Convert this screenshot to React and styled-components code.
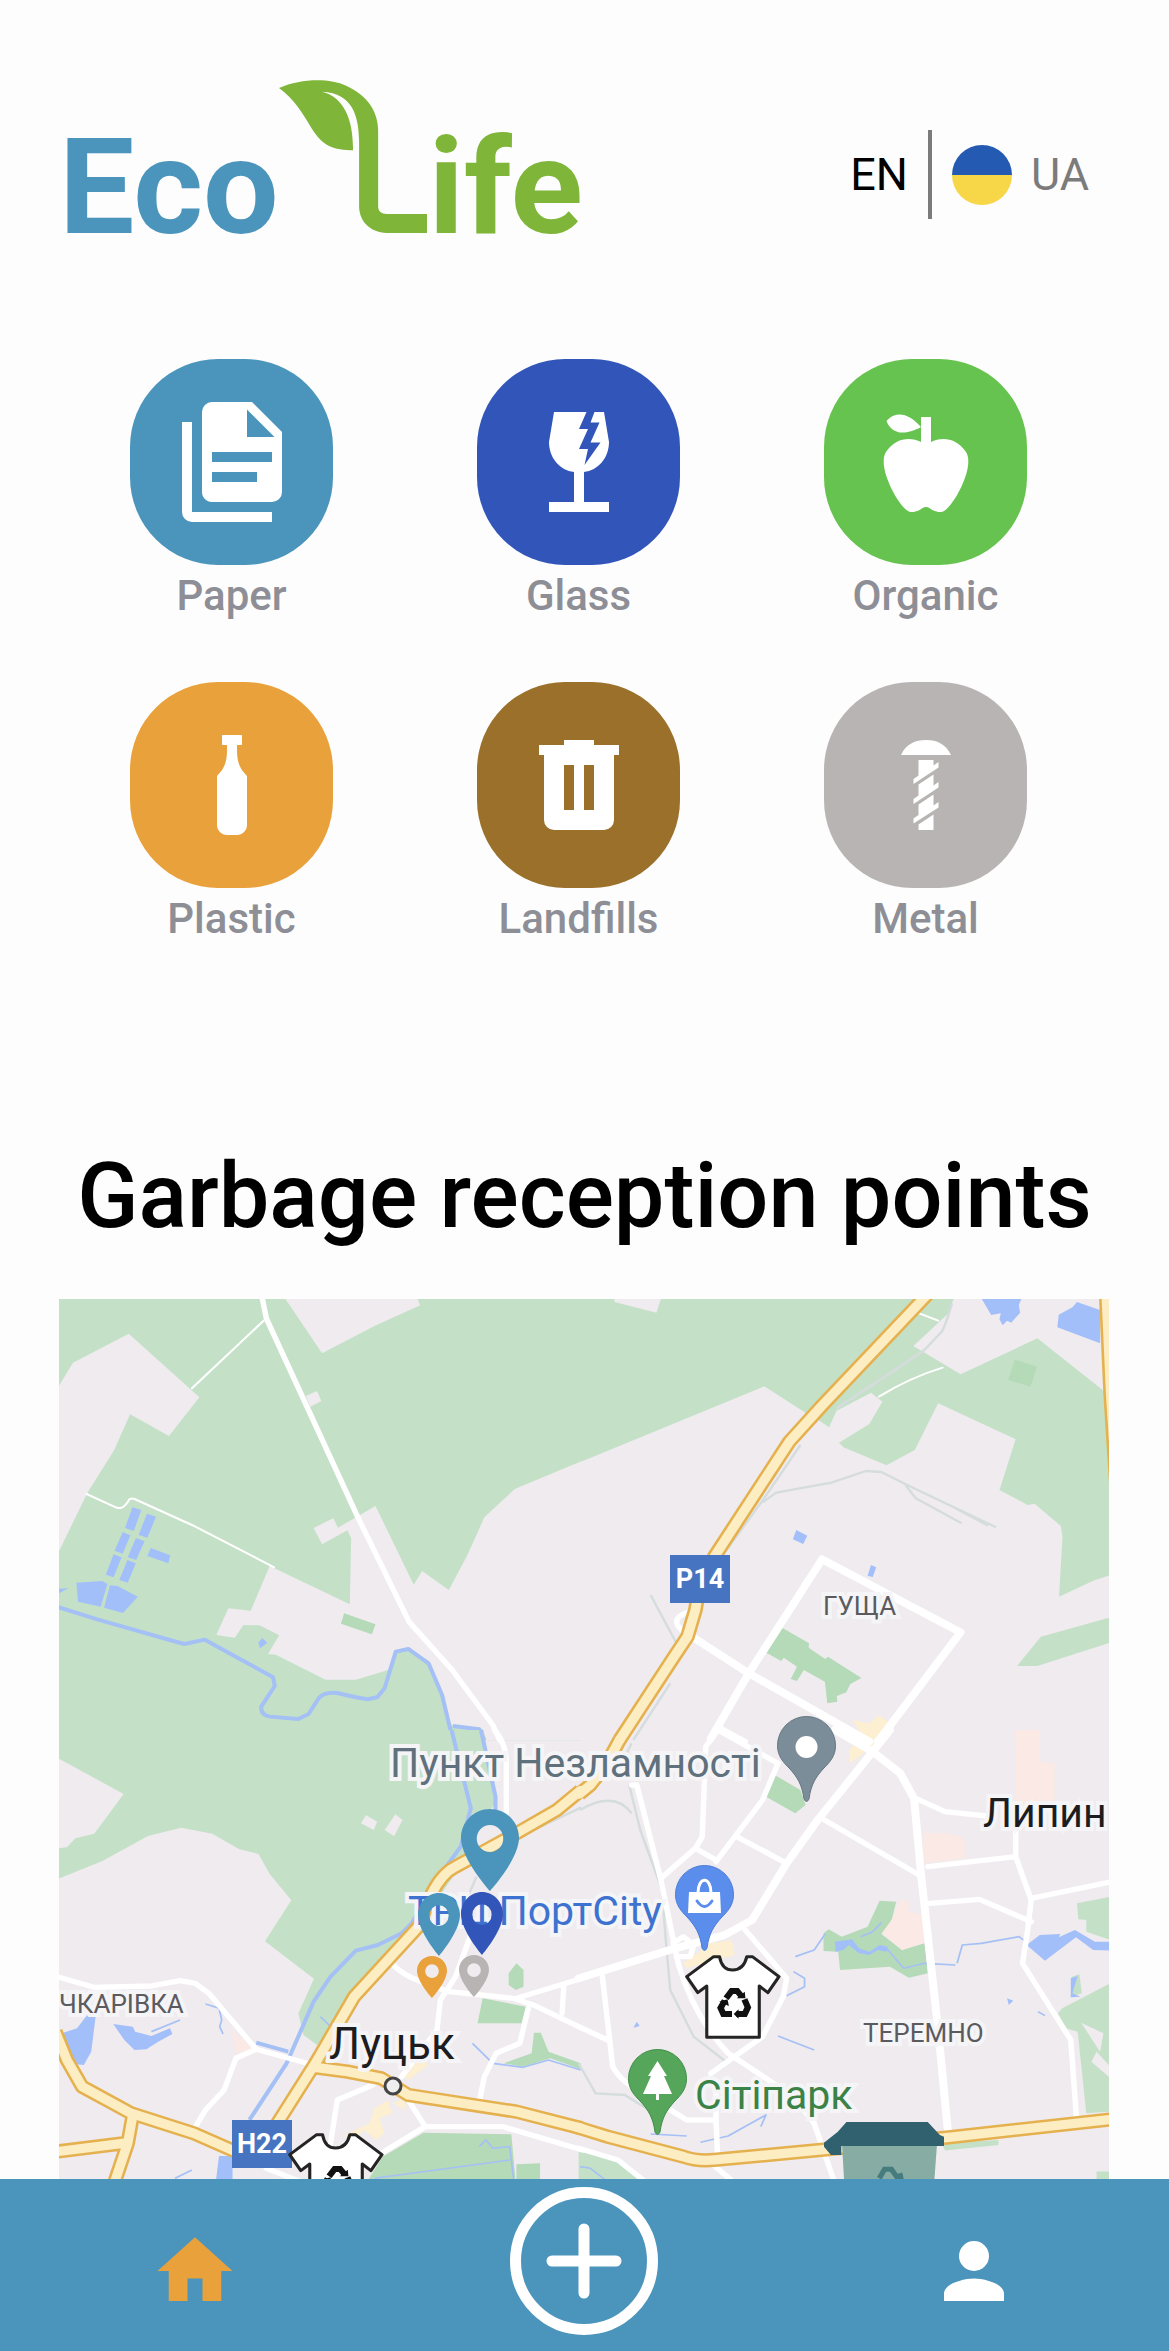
import React from "react";
import styled, { createGlobalStyle } from "styled-components";

const GlobalStyle = createGlobalStyle`
  * { box-sizing: border-box; }
  body {
    margin: 0;
    background: #fdfdfd;
    font-family: Roboto, "Liberation Sans", sans-serif;
  }
  button { font: inherit; color: inherit; border: 0; padding: 0; background: none; cursor: pointer; }
  svg { display: block; }
`;

const Page = styled.div`
  display: flex;
  flex-direction: column;
  height: 100vh;
  overflow: hidden;
`;

const Content = styled.main`
  display: flex;
  flex: 1;
  flex-direction: column;
  min-height: 0;
`;

/* ---------- header ---------- */

const Header = styled.header`
  display: flex;
  justify-content: space-between;
  align-items: flex-end;
  padding: 80px 80px 0 59px;
`;

const Logo = styled.a`
  display: flex;
  align-items: baseline;
  font-size: 134px;
  line-height: 134px;
  font-weight: 700;
  text-decoration: none;
`;

const LogoWord = styled.span`
  color: ${(p) => p.$color};
`;

const LeafL = styled.svg`
  width: 148px;
  height: 153px;
  margin-right: 2px;
  fill: #7fb539;
`;

const Languages = styled.div`
  display: flex;
  align-items: center;
  padding-bottom: 36px;
  font-size: 45px;
  line-height: 54px;
`;

const LangButton = styled.button`
  display: flex;
  align-items: center;
  gap: 19px;
  color: ${(p) => (p.$active ? "#000" : "#7b7b7b")};
`;

const Divider = styled.span`
  width: 4px;
  height: 89px;
  margin: 0 20px;
  background: #7b7b7b;
`;

const Flag = styled.span`
  width: 60px;
  height: 60px;
  border-radius: 50%;
  background: linear-gradient(#255ab2 50%, #f7d748 50%);
`;

/* ---------- categories ---------- */

const Categories = styled.nav`
  display: grid;
  grid-template-columns: repeat(3, 1fr);
  row-gap: 61px;
  padding: 104px 70px 0 58px;
`;

const Category = styled.button`
  display: flex;
  flex-direction: column;
  align-items: center;
  gap: 6px;
  color: #8e8f96;
  font-size: 42px;
  line-height: 50px;
  font-weight: 500;
`;

const Badge = styled.span`
  display: flex;
  align-items: center;
  justify-content: center;
  width: 203px;
  height: 206px;
  border-radius: 88px;
  background: ${(p) => p.$color};
`;

const BadgeIcon = styled.svg`
  width: 120px;
  height: 120px;
  fill: #fff;
  fill-rule: evenodd;
`;

const categories = [
  {
    name: "Paper",
    color: "#4b95bc",
    d: "M15 7H20.5L15 1.5V7M8 0H16L22 6V18A2 2 0 0 1 20 20H8C6.89 20 6 19.1 6 18V2A2 2 0 0 1 8 0M8 10V12H20V10H8M8 14V16H17V14H8M4 4V22H20V24H4A2 2 0 0 1 2 22V4H4Z",
  },
  {
    name: "Glass",
    color: "#3155b8",
    d: "M7 2H13.5L12 5.4H13.8L12 9.4H13.8L13.1 12.6L16.3 8.1H14.3L16.1 4.1H14.3L15.1 2H17L18 8C18 11.2 15.8 13.7 13 14V20H18V22H6V20H11V14C8.2 13.7 6 11.2 6 8L7 2Z",
  },
  {
    name: "Organic",
    color: "#67c34f",
    d: "M20 10C22 13 17 22 15 22C13 22 13 21 12 21C11 21 11 22 9 22C7 22 2 13 4 10C6 7 9 7 11 8V5C5.38 8.07 4.11 3.78 4.11 3.78C4.11 3.78 6.77.19 11 5V3H13V8C15 7 18 7 20 10Z",
  },
  {
    name: "Plastic",
    color: "#e9a13b",
    d: "M14 2V4H13V5C13 8 13.9 9 15 10.2V20C15 21.1 14.1 22 13 22H11C9.9 22 9 21.1 9 20V10.2C10.100 9 11 8 11 5V4H10V2H14Z",
  },
  {
    name: "Landfills",
    color: "#9b702b",
    d: "M9 3V4H4V6H5V19A2 2 0 0 0 7 21H17A2 2 0 0 0 19 19V6H20V4H15V3H9M9 8H11V17H9V8M13 8H15V17H13V8Z",
  },
  {
    name: "Metal",
    color: "#b8b4b3",
    d: "M7 6C8 3.800 9.800 3 12 3S16 3.800 17 6ZM10.500 7H13.500V8.100L14.500 7.400V8.500L9.500 11.800V10.800L10.500 10.100ZM13.500 9.900V12.100L14.500 11.400V12.500L9.500 15.800V14.800L10.500 14.100V11.900ZM13.500 13.900V16.100L14.500 15.400V16.500L9.500 19.700V18.700L10.500 18V15.900ZM13.500 17.900V21H10.500V19.900Z",
  },
];

/* ---------- map ---------- */

const Title = styled.h1`
  margin: 204px 0 53px;
  text-align: center;
  font-size: 90px;
  line-height: 98px;
  font-weight: 500;
  color: #000;
`;

const MapFrame = styled.section`
  position: relative;
  flex: 1;
  min-height: 0;
  margin: 0 60px 0 59px;
  overflow: hidden;
  background: #efebef;
`;

const Terrain = styled.svg`
  width: 1050px;
  height: 900px;

  path { stroke-linejoin: round; }
  .land { fill: #efebef; }
  .field { fill: #c4e1c8; }
  .park { fill: #b5dab8; }
  .lake { fill: #a3bffa; }
  .pink { fill: #fbe9e5; }
  .cream { fill: #fcefd2; }
  .river, .street, .rail, .casing, .highway { fill: none; }
  .river { stroke: #a4c0f5; stroke-width: 12; }
  .stream { fill: none; stroke: #a4c0f5; stroke-width: 5; }
  .rail { stroke: #d5dcdd; stroke-width: 7; }
  .street { stroke: #fff; stroke-width: 16; stroke-linecap: round; }
  .thin { stroke-width: 6; }
  .wide { stroke-width: 23; }
  .casing { stroke: #e5b14f; stroke-width: 43; }
  .highway { stroke: #fdedc2; stroke-width: 28; stroke-linecap: round; }
`;

const labelSizes = { small: 26, medium: 41, large: 44 };

const MapLabel = styled.span`
  position: absolute;
  left: ${(p) => p.$x}px;
  top: ${(p) => p.$y}px;
  font-size: ${(p) => labelSizes[p.$size || "medium"]}px;
  line-height: ${(p) => labelSizes[p.$size || "medium"]}px;
  color: ${(p) => p.$color};
  white-space: nowrap;
  -webkit-text-stroke: 8px #f5f4f6;
  paint-order: stroke fill;
`;

const RoadSign = styled.span`
  position: absolute;
  left: ${(p) => p.$x}px;
  top: ${(p) => p.$y}px;
  width: 60px;
  height: 48px;
  background: #4774c0;
  color: #fff;
  font-size: 27px;
  line-height: 48px;
  font-weight: 700;
  text-align: center;
`;

const Marker = styled.button`
  position: absolute;
  left: ${(p) => p.$x}px;
  top: ${(p) => p.$y}px;
  width: ${(p) => p.$w}px;
  height: ${(p) => p.$h}px;

  svg { width: 100%; height: 100%; overflow: visible; }
`;

/* Four drawing sheets that tile the map, each with its own grid. */
const sheets = [
  {
    at: "translate(521 -9) scale(.3444 .3333)",
    areas: [
      ["field", "M-4 26H1085L1070 70L968 168L1105 253L1328 145L1540 318V855L1490 872L1391 920L1401 740L1396 708L1320 641L1300 645L1218 600L1265 448L1040 340L972 480L890 526L765 472L752 458L840 402L878 335L845 308L745 362L723 412L700 395L657 370L535 289L-4 518Z"],
      ["land", "M100 20V36L222 68L237 20Z"],
      ["field", "M1338 1040L1540 982V1058L1328 1128H1269Z"],
      ["park", "M1263 208L1327 230L1308 290L1243 270ZM588 1014L665 1060L664 1073L712 1107L720 1100L817 1164L785 1182L773 1207L746 1218L747 1235L718 1240L711 1175L650 1140L630 1173L612 1167L630 1130L592 1103L584 1113L541 1088Z"],
      ["lake", "M1166 26H1282L1274 45L1278 68L1252 98L1240 92L1227 106L1218 88L1222 70L1194 75ZM1390 74L1430 52L1443 36L1510 60V160L1386 112ZM628 720L660 737L648 762L618 748ZM845 825L860 832L850 861L835 857Z"],
      ["cream", "M790 1290L840 1300L870 1275L900 1300L850 1350L810 1320Z"],
      ["pink", "M1262 1322H1332V1350H1262Z"],
      ["rail", "M1080 40Q1060 110 1050 125L1000 180Q900 250 745 355M640 465L530 632L415 795M530 637L570 608L730 578L830 543L875 546L950 585L1208 712M945 585L975 625L1108 700M1090 655L1185 707M205 915L280 1060M262 1180L155 1350"],
    ],
    streets: [
      ["thin", "M985 70L1040 92M868 320Q960 262 1053 233"],
      ["", "M400 1310L480 1355M320 965Q268 980 285 1008Q300 1030 325 1040"],
      ["wide", "M703 808L1105 1027L865 1355M703 808L490 1150M325 1040L490 1150L840 1355M490 1150L380 1345"],
    ],
    highways: "M1012 10L700 350L608 455L390 800L345 900L335 960L312 1040L270 1105L115 1350M1528 10L1541 310L1560 620",
  },
  {
    at: "translate(-9 -9) scale(.338 .3333)",
    areas: [
      ["field", "M26 20H1570V1352H26Z"],
      ["land", "M20 298L68 218L233 131L442 322L352 438L237 373L190 480L110 610L26 785H20ZM692 20L805 190L960 108L1095 46L1085 20ZM757 318L790 303L803 333L770 350ZM1572 514L1375 597L1285 682L1235 795L1180 900L1101 843L1076 884L963 648L852 713L838 685L780 714L805 763L880 721L891 745L887 943L650 828L594 962L528 955L492 1035L547 1043L572 1005L620 1006L678 1036L645 1092L668 1094L815 1169H905L1000 1140L1025 1085L1065 1078L1120 1125L1160 1215L1195 1352H1572Z"],
      ["field", "M1185 1305L1280 1318L1290 1352H1195Z"],
      ["park", "M870 970L963 1003L952 1033L861 1001Z"],
      ["lake", "M244 652L270 660L248 723L222 714ZM287 671L314 680L288 743L262 735ZM215 726L238 736L215 791L191 782ZM254 744L280 753L255 810L230 802ZM188 793L212 802L188 862L165 854ZM229 810L254 820L230 878L205 870ZM298 774L356 796L350 820L288 798ZM78 878L155 873L170 882L150 950L83 935ZM177 886L200 888L260 920L216 969L160 953ZM26 896L55 895L26 910ZM628 1044L643 1058L622 1075L616 1058Z"],
      ["river", "M20 950L140 988L365 1053L398 1062L458 1049L555 1103L660 1162L665 1188L625 1250Q622 1275 650 1280L735 1287L765 1272L795 1225Q810 1205 850 1209L905 1222L940 1228L968 1222L990 1195L1023 1085L1060 1077L1120 1120L1160 1215L1193 1355M1192 1308L1270 1318L1285 1350"],
    ],
    streets: [
      ["thin", "M632 92L420 295M108 612L190 650Q215 665 235 628Q242 624 250 627L420 705L663 832"],
      ["", "M626 15L640 85L910 680L1062 995L1190 1140L1310 1305L1330 1350"],
    ],
  },
  {
    at: "translate(-9 431) scale(.338 .3333)",
    areas: [
      ["field", "M26 0V86L218 192L131 311L75 325L50 352L26 355V446L155 393L290 318L388 293L480 311L560 358L617 372L650 432L714 511L636 634L781 746L735 850L750 915L790 945L1090 590L1220 400L1250 320L1320 215L1282 0Z"],
      ["land", "M935 255L968 275L958 300L920 280ZM1022 253L1043 270L1018 319L990 300Z"],
      ["park", "M1357 730L1380 700L1401 720V770L1378 780L1357 765ZM1280 805L1408 830L1395 880H1265ZM1432 908H1452L1475 965L1570 1000V1018L1480 985L1400 1010L1342 1000L1425 970ZM935 1360L985 1280L1105 1208L1365 1213L1378 1360ZM1380 1303L1450 1300V1360H1380Z"],
      ["lake", "M35 910L80 895L110 855L135 860L122 965L100 1005L75 1003ZM187 882L245 890L252 905L300 918L355 895L362 912L320 935L285 958L250 960L220 930ZM500 1278H540V1360H490Z"],
      ["pink", "M535 895L550 912L605 955L552 970Z"],
      ["cream", "M870 1215L945 1180L960 1135L1000 1110L1012 1150L975 1165L990 1210L965 1230L930 1200L890 1240ZM1040 1030L1100 985L1120 1005L1060 1050ZM1140 1090L1160 1110L1140 1135ZM1185 1090L1205 1115L1185 1140ZM1015 1120L1050 1105V1140Z"],
      ["rail", "M1262 440L1232 510M1572 232L1400 315"],
      ["stream", "M460 822L500 835L508 870L502 890L512 912M300 905L385 870M1250 940L1310 1000L1400 1012L1475 990L1570 1020M800 860L840 900M1270 1250L1290 1230L1310 1255L1360 1250L1372 1350M960 1345L1360 1290M370 1345L420 1320"],
      ["river", "M1188 0L1245 235L1215 350L1165 420L1070 580L1040 610L970 645L905 662L830 740L780 815L700 1000L590 1170M1275 0L1318 200V250M610 938L705 965"],
    ],
    streets: [
      ["", "M20 740L130 772L300 768L385 752L430 760L470 790L610 958L760 1000M610 958L550 985L515 1080L460 1140L425 1200M1250 600L1200 740L1155 810L1145 900L1040 1040M1380 805L1575 745M1415 835L1390 940L1320 970L1285 1040L1270 1115M1520 770L1515 850M830 1240L850 1110L955 1065M1060 1110L1110 1190H1340L1575 1260M1110 1190L980 1270M640 1315L740 1355"],
      ["", "M1315 0Q1350 40 1350 100V250M1010 700Q1050 740 1100 755L1180 785L1370 805L1430 825L1575 895"],
    ],
    highways: "M1569 182L1500 240L1380 310L1200 410Q1160 430 1130 490L1090 590L900 800L785 1000L660 1200M785 1012L880 1025L980 1045L1060 1095L1380 1145L1572 1195M16 905L50 990L95 1070L240 1150L425 1210L560 1270M245 1155L230 1240L190 1360M20 1265L215 1240",
  },
  {
    at: "translate(521 431) scale(.3444 .3333)",
    areas: [
      ["park", "M565 135L640 180L655 225L625 250L540 200ZM870 512L918 515L905 570L875 612L935 660L1000 638L1010 730L955 743L900 710L755 720L750 665L707 663V610L722 598L760 620L835 590Z"],
      ["field", "M1443 520L1540 500V630L1470 605V570L1447 568ZM1540 760L1400 835L1388 850L1410 895L1445 905L1470 1150L1540 1145ZM1428 740L1450 733L1457 790L1425 800ZM-4 1265L60 1270L130 1300L180 1360H-4ZM1050 1240L1215 1230V1245L1060 1262ZM1500 1325H1540V1360H1500Z"],
      ["land", "M1455 878L1520 910L1510 965ZM1500 965L1540 1010V1045L1485 995Z"],
      ["pink", "M1262 0H1335V95L1378 98V210L1265 240ZM995 310Q1100 305 1118 330V385L1000 400ZM930 508L955 515V545L1000 555V640L935 660L877 610L905 570Z"],
      ["cream", "M780 60L810 30V0H880L850 50L785 100ZM380 640L440 630L450 675L310 715L300 700Z"],
      ["lake", "M1297 645L1335 615L1395 612L1390 622L1437 600L1495 635H1540V662L1490 660L1440 622L1350 692ZM740 635L790 628L810 655L840 665L870 645L893 650L890 665L865 660L840 675L810 670L780 645L765 660L742 665ZM1240 805L1258 812L1245 825ZM165 875L173 888L155 893ZM1425 745L1445 738L1430 790L1453 800L1425 802Z"],
      ["stream", "M1095 700L1110 645L1165 640L1275 620L1290 632M815 620L850 605L875 578M625 680L680 660L712 612M575 918L680 960M620 725L652 745V770L600 797M350 1237L430 1218L540 1155L525 1190M205 1212L310 1218M890 655L940 715L1000 700L1090 705M1330 845L1350 857M0 1310L30 1315L80 1355"],
      ["rail", "M143 165L175 300L238 480L250 640L262 780L330 920L430 1000M0 240Q100 180 150 250M150 40L125 90M-4 1000L45 1090L130 1095L200 1140M710 1270L740 1355"],
    ],
    streets: [
      ["", "M400 0L575 100L530 210L395 395M400 0L365 50L355 320L335 355L235 445M335 355L395 390M455 320L600 400M710 270L985 435M975 205L1060 245L1180 258M1265 300V380L1310 510L1300 600L1285 700L1425 930L1442 1170M1010 410L1265 380M1015 520L1160 508L1310 575M1310 505L1545 455M480 600L600 745L590 800L530 920L380 1030M65 740L95 1010Q120 1060 200 1100L310 1170H395L400 1290M395 1080V1170M-4 890L80 930M-4 1255L110 1290L195 1360M370 1290L450 1360M270 640L300 620L330 645L320 680H280"],
      ["", "M150 165H165L235 450L285 700Q330 860 430 970L620 1100L680 1180L740 1360"],
      ["wide", "M740 0L850 65L930 130L970 205L990 430L1040 900L1070 1222M900 0L850 65L690 270L600 400L500 570L420 615L260 660L-4 745"],
    ],
    highways: "M-2 192L30 165L75 105L116 28M-8 1192L80 1220L300 1280Q340 1295 390 1290L700 1260L1070 1222L1545 1168",
  },
];

function Landscape() {
  return (
    <Terrain viewBox="0 0 1050 900" aria-hidden="true">
      {sheets.map((s) => (
        <g key={s.at} transform={s.at}>
          {s.areas.map(([kind, d], i) => <path key={i} className={kind} d={d} />)}
        </g>
      ))}
      {sheets.map((s) => (
        <g key={s.at} transform={s.at}>
          {s.streets.map(([size, d], i) => <path key={i} className={`street ${size}`} d={d} />)}
        </g>
      ))}
      {["casing", "highway"].map((layer) =>
        sheets.map((s) => <path key={layer + s.at} className={layer} transform={s.at} d={s.highways} />)
      )}
      <circle cx="334" cy="787" r="8" fill="#eee" stroke="#444" strokeWidth="3" />
    </Terrain>
  );
}

function Pin({ x, y, w, h, color, name }) {
  return (
    <Marker $x={x} $y={y} $w={w} $h={h} aria-label={name}>
      <svg viewBox="5 2 14 20" preserveAspectRatio="none">
        <path
          fill={color}
          fillRule="evenodd"
          d="M12 2C8.13 2 5 5.130 5 9C5 14.250 12 22 12 22S19 14.250 19 9C19 5.130 15.870 2 12 2ZM12 5.900A3.200 3.300 0 1 1 12 12.500A3.200 3.300 0 1 1 12 5.900Z"
        />
      </svg>
    </Marker>
  );
}

function PlacePin({ x, y, color, edge, name, children }) {
  return (
    <Marker $x={x} $y={y} $w={59} $h={86} aria-label={name}>
      <svg viewBox="0 0 59 86">
        <path
          fill={color}
          stroke={edge}
          strokeWidth="1"
          d="M29.500 .5A29 29 0 0 0 .5 29.500C.5 40 6 46 13 53C20 61 25 68 27 83Q29.500 88 32 83C34 68 39 61 46 53C53 46 58.500 40 58.500 29.500A29 29 0 0 0 29.500 .5Z"
        />
        {children}
      </svg>
    </Marker>
  );
}

function Shirt({ x, y }) {
  return (
    <Marker $x={x} $y={y} $w={95} $h={84} aria-label="Clothes">
      <svg viewBox="305 675 275 252" preserveAspectRatio="none">
        <path
          fill="#fff"
          stroke="#242424"
          strokeWidth="9"
          strokeLinejoin="round"
          d="M310 740L388 680H405Q412 720 443 720Q475 720 484 680H500L577 740L545 788L520 768V922H368V768L342 788Z"
        />
        <path
          fill="none"
          stroke="#111"
          strokeWidth="18"
          d="M424 805L440 783H456L468 798M477 808L487 832L478 852H454M441 852H416L408 834L420 812"
        />
        <path fill="#111" d="M455 805L480 805L478 785ZM460 838V866L446 852ZM404 815L428 808L432 828Z" />
      </svg>
    </Marker>
  );
}

function Bin({ x, y }) {
  return (
    <Marker $x={x} $y={y} $w={120} $h={100} aria-label="Container">
      <svg viewBox="710 1176 347 300" preserveAspectRatio="none">
        <path fill="#86aca3" d="M762 1240H1037L1020 1476H775Z" />
        <path fill="#31616f" d="M775 1176H1010L1045 1215L1057 1220V1248H760V1275H730L710 1250V1238L750 1205Z" />
        <path fill="none" stroke="#467c7e" strokeWidth="15" d="M870 1345L885 1318H905L920 1340L938 1335M920 1352L940 1345" />
      </svg>
    </Marker>
  );
}

/* ---------- bottom bar ---------- */

const TabBar = styled.nav`
  display: grid;
  grid-template-columns: repeat(3, 1fr);
  justify-items: center;
  align-items: end;
  padding: 8px 0 16px;
  background: #4b95bc;
`;

const Tab = styled.a`
  padding-bottom: 19px;
  color: ${(p) => p.$color};

  svg { width: 90px; height: 90px; fill: currentColor; }
`;

const AddButton = styled.button`
  svg { width: 148px; height: 148px; fill: none; stroke: #fff; stroke-width: 11; stroke-linecap: round; }
`;

export default function App() {
  return (
    <Page>
      <GlobalStyle />
      <Content>
        <Header>
          <Logo href="#" aria-label="Eco Life">
            <LogoWord $color="#4b95bc">Eco</LogoWord>
            <LeafL viewBox="673 60 412 458" preserveAspectRatio="none" aria-hidden="true">
              <path d="M673 84C735 54 815 54 860 77C920 106 949 155 949 212V438C949 453 958 461 973 461H1085V518H973C925 516 896 482 896 438V245C895 170 880 100 793 95C855 112 880 180 879 270C818 272 790 250 765 207C738 158 715 116 673 84Z" />
            </LeafL>
            <LogoWord $color="#7fb539">ife</LogoWord>
          </Logo>
          <Languages>
            <LangButton $active>EN</LangButton>
            <Divider />
            <LangButton>
              <Flag />
              UA
            </LangButton>
          </Languages>
        </Header>

        <Categories aria-label="Waste categories">
          {categories.map((c) => (
            <Category key={c.name}>
              <Badge $color={c.color}>
                <BadgeIcon viewBox="0 0 24 24" aria-hidden="true">
                  <path d={c.d} />
                </BadgeIcon>
              </Badge>
              {c.name}
            </Category>
          ))}
        </Categories>

        <Title>Garbage reception points</Title>

        <MapFrame aria-label="Map">
          <Landscape />
          <RoadSign $x={611} $y={256}>P14</RoadSign>
          <RoadSign $x={173} $y={821}>H22</RoadSign>
          <MapLabel $size="small" $x={764} $y={294} $color="#5b5b5f">ГУЩА</MapLabel>
          <MapLabel $size="small" $x={0} $y={692} $color="#5b5b5f">ЧКАРІВКА</MapLabel>
          <MapLabel $size="small" $x={804} $y={721} $color="#5b5b5f">ТЕРЕМНО</MapLabel>
          <MapLabel $x={331} $y={444} $color="#5f717d">Пункт Незламності</MapLabel>
          <MapLabel $x={349} $y={592} $color="#3d72d0">ТРЦ ПортCity</MapLabel>
          <MapLabel $x={924} $y={494} $color="#1d1d1f">Липин</MapLabel>
          <MapLabel $size="large" $x={270} $y={723} $color="#1d1d1f">Луцьк</MapLabel>
          <MapLabel $x={636} $y={776} $color="#3b8246">Сітіпарк</MapLabel>

          <PlacePin x={718} y={417} color="#7b8d99" edge="#647581" name="Пункт Незламності">
            <circle cx="29.500" cy="31" r="11" fill="#fff" />
          </PlacePin>
          <PlacePin x={616} y={566} color="#5b8dec" edge="#4c7cd8" name="ПортCity">
            <path fill="#fff" d="M14 27H45L46 48H13Z" />
            <path fill="none" stroke="#fff" strokeWidth="3" d="M23 28C23 11 36 11 36 28" />
            <path fill="none" stroke="#5b8dec" strokeWidth="3" strokeLinecap="round" d="M22 36Q29.500 47 37 36" />
          </PlacePin>
          <PlacePin x={569} y={750} color="#55a65a" edge="#3f8d48" name="Сітіпарк">
            <path fill="#fff" d="M29.500 12L39 27H36L44 45H31V51H28V45H15L23 27H20Z" />
          </PlacePin>

          <Pin x={402} y={510} w={58} h={82} color="#4b95bc" name="Paper" />
          <Pin x={359} y={594} w={42} h={63} color="#4b95bc" name="Paper" />
          <Pin x={402} y={593} w={42} h={63} color="#3155b8" name="Glass" />
          <Pin x={358} y={657} w={30} h={42} color="#e9a13b" name="Plastic" />
          <Pin x={400} y={656} w={30} h={42} color="#b8b4b3" name="Metal" />
          <Shirt x={626} y={656} />
          <Shirt x={229} y={834} />
          <Bin x={765} y={823} />
        </MapFrame>
      </Content>

      <TabBar aria-label="Main">
        <Tab href="#" $color="#e9a13b" aria-label="Home">
          <svg viewBox="0 0 24 24"><path d="M10 20V14H14V20H19V12H22L12 3L2 12H5V20Z" /></svg>
        </Tab>
        <AddButton aria-label="Add">
          <svg viewBox="0 0 148 148">
            <circle cx="74" cy="74" r="68.500" />
            <path d="M74 42V106M42 74H106" />
          </svg>
        </AddButton>
        <Tab href="#" $color="#fff" aria-label="Profile">
          <svg viewBox="0 0 24 24"><path d="M12 12A4 4 0 1 0 12 4A4 4 0 0 0 12 12ZM12 14C9.330 14 4 15.340 4 18V20H20V18C20 15.340 14.670 14 12 14Z" /></svg>
        </Tab>
      </TabBar>
    </Page>
  );
}
